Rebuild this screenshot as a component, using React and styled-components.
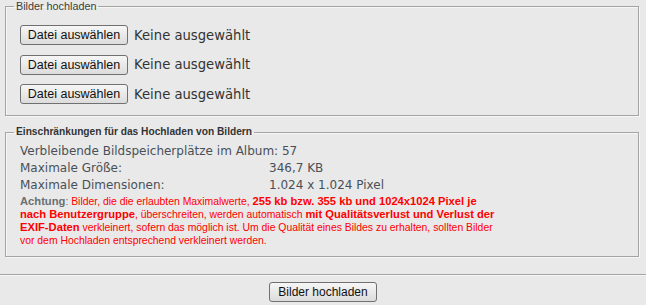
import styled, { createGlobalStyle } from "styled-components";

const GlobalStyle = createGlobalStyle`
  html, body {
    margin: 0;
    padding: 0;
    background: #e8e9e8;
  }
`;

const Page = styled.div`
  width: 646px;
`;

// Rahmen mit Legende (wie ein klassisches fieldset)
const Box = styled.fieldset`
  margin: ${(p) => p.$margin || "0 7px 0 5px"};
  padding: ${(p) => p.$pad};
  border: 1px solid #a3a4a3;
  box-shadow: 1px 1px 0 #f6f6f6, inset 1px 1px 0 #f6f6f6;
  min-width: 0;
`;

const Legend = styled.legend`
  margin-left: -6px;
  padding: 0 2px;
  font-family: "Liberation Sans", Arial, sans-serif;
  font-size: ${(p) => (p.$bold ? "10.2px" : "10.8px")};
  font-weight: ${(p) => (p.$bold ? 700 : 400)};
  color: ${(p) => (p.$bold ? "#333" : "#3c3c3c")};
  line-height: 12px;
`;

const FileList = styled.div`
  display: flex;
  flex-direction: column;
  gap: 9.5px;
`;

const FileRow = styled.div`
  display: flex;
  align-items: center;
  gap: 6px;
`;

const Button = styled.button`
  height: 20px;
  width: 108px;
  padding: 0;
  border: 1px solid #707070;
  border-radius: 3px;
  background: linear-gradient(#f6f6f6, #dcdcdc);
  font-family: "Liberation Sans", Arial, sans-serif;
  font-size: ${(p) => p.$size || "12.5px"};
  color: #111;
  cursor: pointer;
`;

const NoFile = styled.span`
  font-family: "DejaVu Sans", Verdana, sans-serif;
  font-size: 13.2px;
  color: #333;
`;

const InfoGrid = styled.div`
  display: grid;
  grid-template-columns: 249px auto;
  font-family: "DejaVu Sans", Verdana, sans-serif;
  font-size: 12px;
  line-height: 17px;
  color: #4a5058;
`;

const Cell = styled.span`
  white-space: nowrap;
  grid-column: ${(p) => (p.$span ? "1 / 3" : "auto")};
`;

const Notice = styled.div`
  margin-top: 1px;
  font-family: "Liberation Sans", Tahoma, sans-serif;
  font-size: 10.4px;
  color: #ff0000;
`;

const NoticeLine = styled.div`
  height: 13px;
  line-height: 13px;
  white-space: nowrap;
`;

const Strong = styled.b`
  font-family: "Liberation Sans", Verdana, sans-serif;
  font-size: 11.2px;
  font-weight: 700;
  line-height: 13px;
  color: ${(p) => p.$color || "#ff0000"};
`;

const Gray = styled.span`
  color: #6b6f73;
`;

const Divider = styled.hr`
  margin: 17px 0 0 0;
  border: 0;
  border-top: 1px solid #a3a4a3;
  border-bottom: 1px solid #f6f6f6;
`;

const Footer = styled.div`
  display: flex;
  justify-content: center;
  padding-top: 6px;
`;

export default function App() {
  return (
    <Page>
      <GlobalStyle />
      <Box $pad="13px 14px 11px 14px">
        <Legend>Bilder hochladen</Legend>
        <FileList>
          {[0, 1, 2].map((i) => (
            <FileRow key={i}>
              <Button type="button">Datei auswählen</Button>
              <NoFile>Keine ausgewählt</NoFile>
            </FileRow>
          ))}
        </FileList>
      </Box>
      <Box $pad="5px 14px 9px 14px" $margin="10px 7px 0 5px">
        <Legend $bold>Einschränkungen für das Hochladen von Bildern</Legend>
        <InfoGrid>
          <Cell $span>Verbleibende Bildspeicherplätze im Album: 57</Cell>
          <Cell>Maximale Größe:</Cell>
          <Cell>346,7 KB</Cell>
          <Cell>Maximale Dimensionen:</Cell>
          <Cell>1.024 x 1.024 Pixel</Cell>
        </InfoGrid>
        <Notice>
          <NoticeLine>
            <Strong $color="#6b6f73">Achtung</Strong>
            <Gray>:</Gray> Bilder, die die erlaubten Maximalwerte,{" "}
            <Strong>255 kb bzw. 355 kb und 1024x1024 Pixel je</Strong>
          </NoticeLine>
          <NoticeLine>
            <Strong>nach Benutzergruppe</Strong>, überschreiten, werden
            automatisch <Strong>mit Qualitätsverlust und Verlust der</Strong>
          </NoticeLine>
          <NoticeLine>
            <Strong>EXIF-Daten</Strong> verkleinert, sofern das möglich ist. Um
            die Qualität eines Bildes zu erhalten, sollten Bilder
          </NoticeLine>
          <NoticeLine>
            vor dem Hochladen entsprechend verkleinert werden.
          </NoticeLine>
        </Notice>
      </Box>
      <Divider />
      <Footer>
        <Button type="button" $size="12px">
          Bilder hochladen
        </Button>
      </Footer>
    </Page>
  );
}
